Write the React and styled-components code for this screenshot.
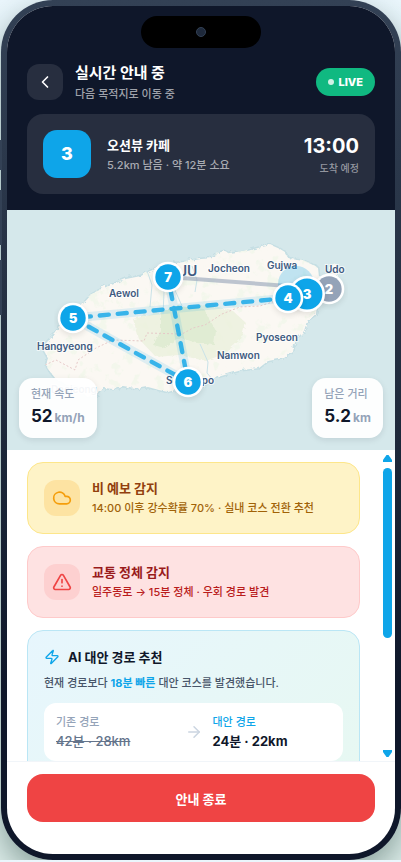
import styled, { createGlobalStyle } from "styled-components";
import {
  ArrowRight,
  ChevronLeft,
  Cloud,
  TriangleAlert,
  Zap,
} from "lucide-react";

const route = "M288 88 L73 108 L188 172 L168 67";

const coast =
  "M168 53 L183 51 L200 48 L213 47 L217 42 L223 40 L229 43 L243 41 L257 37 L270 34 L279 38 L284 41 L287 47 L296 49 L303 50 L310 53 L317 57 L318 66 L325 73 L321 85 L316 93 L315 103 L306 110 L303 120 L296 127 L293 134 L292 141 L283 147 L267 150 L258 157 L241 159 L230 162 L217 166 L207 174 L195 178 L180 177 L167 181 L158 179 L147 176 L135 178 L123 176 L112 178 L103 177 L96 184 L86 186 L78 176 L66 174 L55 168 L50 162 L45 154 L47 147 L42 138 L46 131 L55 122 L60 110 L73 103 L82 93 L90 84 L100 78 L113 73 L125 68 L140 65 L149 60 Z";

const places = [
  { name: "JU", x: 179, y: 66, size: 14 },
  { name: "Aewol", x: 109, y: 87 },
  { name: "Jocheon", x: 208, y: 62 },
  { name: "Gujwa", x: 267, y: 59 },
  { name: "Udo", x: 325, y: 63 },
  { name: "Hangyeong", x: 37, y: 140 },
  { name: "Pyoseon", x: 256, y: 131 },
  { name: "Namwon", x: 217, y: 149 },
  { name: "Seogwipo", x: 166, y: 174 },
  { name: "Daejeong", x: 51, y: 183 },
];

const pins = [
  { label: 2, x: 329, y: 79, color: "#94a3b8" },
  { label: 3, x: 307, y: 84, r: 18 },
  { label: 4, x: 288, y: 88 },
  { label: 5, x: 73, y: 108 },
  { label: 6, x: 188, y: 172 },
  { label: 7, x: 168, y: 67 },
];

function RouteMap() {
  return (
    <MapSvg
      viewBox="7 0 388 240"
      preserveAspectRatio="xMidYMid slice"
      role="img"
      aria-label="제주 경로 지도"
    >
      <defs>
        <filter id="rough" x="-5%" y="-5%" width="110%" height="110%">
          <feTurbulence baseFrequency="0.15" numOctaves="3" seed="4" />
          <feDisplacementMap in="SourceGraphic" scale="4" />
        </filter>
        <filter id="speckle" x="0" y="0" width="100%" height="100%">
          <feTurbulence
            type="fractalNoise"
            baseFrequency="0.09"
            numOctaves="4"
            seed="8"
          />
          <feColorMatrix values="0 0 0 0 0.9  0 0 0 0 0.93  0 0 0 0 0.84  0 9 0 0 -5.2" />
        </filter>
        <filter id="soft">
          <feGaussianBlur stdDeviation="3" />
        </filter>
        <clipPath id="island">
          <path d={coast} />
        </clipPath>
      </defs>

      <g filter="url(#rough)">
        <path d={coast} fill="none" stroke="#c6dfe4" strokeWidth="3" />
        <path d={coast} fill="#fbf8f3" />
        <path d="M329 57 l5 -5 l4 4 l-1 9 l-6 2 z" fill="#fbf8f3" />
      </g>
      <g clipPath="url(#island)">
        <rect x="40" y="30" width="290" height="160" filter="url(#speckle)" />
        <path
          d="M132 108 L165 100 L205 94 L232 100 L245 112 L240 128 L225 142 L205 150 L178 144 L155 146 L138 128 Z"
          fill="#ebf0dd"
          opacity="0.8"
          filter="url(#rough)"
        />
        <path
          d="M160 100 L178 95 L203 98 L215 120 L213 134 L196 132 L180 127 L164 137 L152 134 L160 120 Z"
          fill="#e0ecd3"
          filter="url(#rough)"
        />
        <path
          d="M146 58 L152 75 L150 97 M155 62 L164 82 L163 104 M174 78 L182 96 M192 56 L197 70 L195 82 M200 134 L208 152 L207 163 L213 170"
          fill="none"
          stroke="#c9e2e8"
        />
        <path
          d="M45 155 L56 150 L75 160 L78 150 L96 138 L113 130 L144 131 L147 123 L182 124 L193 118 L205 115 L222 104 L240 97 L260 96 L285 88"
          fill="none"
          stroke="#e6c9c8"
          strokeDasharray="2 2"
        />
      </g>

      {places.map(({ name, x, y, size = 10 }) => (
        <Place key={name} x={x} y={y} fontSize={size}>
          {name}
        </Place>
      ))}

      <path d="M168 67 L329 79" stroke="#94a3b8" strokeWidth="4" opacity="0.6" />
      <path
        d={route}
        fill="none"
        stroke="#0ea5e9"
        strokeWidth="9"
        strokeLinejoin="round"
        opacity="0.12"
      />
      <path
        d={route}
        fill="none"
        stroke="#0ea5e9"
        strokeWidth="4.4"
        strokeLinecap="round"
        strokeDasharray="9 9"
        opacity="0.8"
      />
      <circle cx="296" cy="74" r="18" fill="#0ea5e9" opacity="0.25" />

      {pins.map(({ label, x, y, r = 15.3, color = "#0ea5e9" }) => (
        <g key={label}>
          <circle cx={x} cy={y + 2} r={r} opacity="0.1" filter="url(#soft)" />
          <circle cx={x} cy={y} r={r} fill="#fff" />
          <circle cx={x} cy={y} r={r - 2.6} fill={color} />
          <PinLabel x={x} y={y + 5}>
            {label}
          </PinLabel>
        </g>
      ))}
    </MapSvg>
  );
}

function App() {
  return (
    <>
      <GlobalStyle />
      <Phone>
        <SideButton $top={140} $height={30} />
        <SideButton $top={190} $height={55} />
        <SideButton $top={260} $height={55} />
        <Screen>
          <Island>
            <Lens />
          </Island>
          <Header>
            <TitleRow>
              <BackButton type="button" aria-label="뒤로">
                <ChevronLeft size={20} />
              </BackButton>
              <Grow>
                <PageTitle>실시간 안내 중</PageTitle>
                <PageSubtitle>다음 목적지로 이동 중</PageSubtitle>
              </Grow>
              <LiveBadge>
                <LiveDot />
                LIVE
              </LiveBadge>
            </TitleRow>
            <NextStop>
              <StopNumber>3</StopNumber>
              <Grow>
                <StopName>오션뷰 카페</StopName>
                <StopMeta>5.2km 남음 · 약 12분 소요</StopMeta>
              </Grow>
              <Arrival>
                <ArrivalTime>13:00</ArrivalTime>
                <ArrivalLabel>도착 예정</ArrivalLabel>
              </Arrival>
            </NextStop>
          </Header>

          <MapArea>
            <RouteMap />
            <Stat $side="left">
              <StatLabel>현재 속도</StatLabel>
              <StatValue>
                52<StatUnit>km/h</StatUnit>
              </StatValue>
            </Stat>
            <Stat $side="right">
              <StatLabel>남은 거리</StatLabel>
              <StatValue>
                5.2<StatUnit>km</StatUnit>
              </StatValue>
            </Stat>
          </MapArea>

          <Body>
            <ScrollArea>
              <Alert $bg="#fef3c7" $border="#fde68a">
                <AlertIcon $bg="#fde3a2" $color="#f59e0b">
                  <Cloud size={20} />
                </AlertIcon>
                <div>
                  <AlertTitle $color="#92400e">비 예보 감지</AlertTitle>
                  <AlertText $color="#a16207">
                    14:00 이후 강수확률 70% · 실내 코스 전환 추천
                  </AlertText>
                </div>
              </Alert>
              <Alert $bg="#fee2e2" $border="#fecaca">
                <AlertIcon $bg="#fdd0d0" $color="#ef4444">
                  <TriangleAlert size={20} />
                </AlertIcon>
                <div>
                  <AlertTitle $color="#991b1b">교통 정체 감지</AlertTitle>
                  <AlertText $color="#b91c1c">
                    일주동로 → 15분 정체 · 우회 경로 발견
                  </AlertText>
                </div>
              </Alert>
              <Suggestion>
                <SuggestionTitle>
                  <Zap size={16} color="#0ea5e9" />
                  AI 대안 경로 추천
                </SuggestionTitle>
                <SuggestionText>
                  현재 경로보다 <strong>18분 빠른</strong> 대안 코스를
                  발견했습니다.
                </SuggestionText>
                <Compare>
                  <Grow>
                    <CompareLabel $color="#94a3b8">기존 경로</CompareLabel>
                    <OldRoute>42분 · 28km</OldRoute>
                  </Grow>
                  <ArrowRight size={18} color="#cbd5e1" />
                  <Grow>
                    <CompareLabel $color="#0ea5e9">대안 경로</CompareLabel>
                    <NewRoute>24분 · 22km</NewRoute>
                  </Grow>
                </Compare>
              </Suggestion>
            </ScrollArea>
            <ScrollRail aria-hidden="true">
              <svg width="9" height="7" viewBox="0 0 9 7">
                <path d="M3.5 0 H5.5 L9 5 V7 H0 V5 Z" fill="#0ea5e9" />
              </svg>
              <ScrollTrack>
                <ScrollThumb />
              </ScrollTrack>
              <svg width="9" height="7" viewBox="0 0 9 7">
                <path d="M0 0 H9 V2 L5.5 7 H3.5 L0 2 Z" fill="#0ea5e9" />
              </svg>
            </ScrollRail>
          </Body>

          <Footer>
            <EndButton type="button">안내 종료</EndButton>
          </Footer>
        </Screen>
      </Phone>
    </>
  );
}

const GlobalStyle = createGlobalStyle`
  * {
    box-sizing: border-box;
  }
  body {
    margin: 0;
    overflow: hidden;
    background: linear-gradient(180deg, #eaf6fc 0%, #d9ecf0 25%, #dcece9 100%);
    color: #0f172a;
    font-family: Inter, "Noto Sans CJK KR", sans-serif;
    font-weight: 500;
  }
  button {
    padding: 0;
    border: 0;
    font-family: inherit;
    cursor: pointer;
  }
`;

const Phone = styled.div`
  position: relative;
  height: calc(100vh - 2px);
  margin-left: 1px;
  padding: 6px;
  border-radius: 52px;
  background: linear-gradient(180deg, #334155 0%, #1e293b 50%, #0f172a 80%);
  box-shadow: 0 12px 30px rgba(15, 50, 40, 0.4);
`;

const SideButton = styled.div`
  position: absolute;
  top: ${({ $top }) => $top}px;
  left: -1px;
  width: 2px;
  height: ${({ $height }) => $height}px;
  background: #334155;
`;

const Screen = styled.main`
  position: relative;
  display: flex;
  flex-direction: column;
  height: 100%;
  overflow: hidden;
  border-radius: 46px;
  background: #fff;
`;

const Island = styled.div`
  position: absolute;
  top: 10px;
  left: 50%;
  display: flex;
  align-items: center;
  justify-content: center;
  width: 120px;
  height: 32px;
  margin-left: -60px;
  border-radius: 16px;
  background: #000;
`;

const Lens = styled.div`
  width: 10px;
  height: 10px;
  border: 1px solid #334155;
  border-radius: 50%;
  background: #1e293b;
`;

const Header = styled.header`
  display: flex;
  flex-direction: column;
  gap: 14px;
  padding: 58px 20px 16px;
  background: #0f172a;
  color: #fff;
`;

const TitleRow = styled.div`
  display: flex;
  align-items: center;
  gap: 12px;
  height: 36px;
`;

const Grow = styled.div`
  flex: 1;
`;

const BackButton = styled.button`
  display: flex;
  align-items: center;
  justify-content: center;
  width: 36px;
  height: 36px;
  border-radius: 12px;
  background: #272e3f;
  color: #fff;
`;

const PageTitle = styled.h1`
  margin: 0;
  font-size: 15px;
  font-weight: 700;
  line-height: 24px;
`;

const PageSubtitle = styled.p`
  margin: 0;
  color: #9fa2aa;
  font-size: 11px;
  line-height: 18px;
`;

const LiveBadge = styled.span`
  display: flex;
  align-items: center;
  gap: 4px;
  padding: 6px 12px;
  border-radius: 20px;
  background: #10b981;
  font-size: 11px;
  font-weight: 800;
  line-height: 16px;
`;

const LiveDot = styled.span`
  width: 6px;
  height: 6px;
  border-radius: 50%;
  background: #cff1e5;
`;

const NextStop = styled.section`
  display: flex;
  align-items: center;
  gap: 16px;
  padding: 16px;
  border-radius: 16px;
  background: #272e3f;
`;

const StopNumber = styled.div`
  width: 48px;
  border-radius: 14px;
  background: #0ea5e9;
  font-size: 18px;
  font-weight: 800;
  line-height: 48px;
  text-align: center;
`;

const StopName = styled.h2`
  margin: 0;
  font-size: 13px;
  font-weight: 700;
  line-height: 22px;
`;

const StopMeta = styled.p`
  margin: 0;
  color: #a9abb2;
  font-size: 11px;
  line-height: 18px;
`;

const Arrival = styled.div`
  text-align: right;
`;

const ArrivalTime = styled.div`
  font-size: 20px;
  font-weight: 700;
  line-height: 28px;
`;

const ArrivalLabel = styled.div`
  color: #93969f;
  font-size: 10px;
  line-height: 16px;
`;

const MapArea = styled.section`
  position: relative;
  height: 240px;
  background: #d5e8eb;
`;

const MapSvg = styled.svg`
  display: block;
  width: 100%;
  height: 100%;
`;

const Place = styled.text`
  fill: #3e5a80;
  stroke: #fff;
  stroke-width: 2px;
  stroke-opacity: 0.7;
  paint-order: stroke;
  font-weight: 600;
`;

const PinLabel = styled.text`
  fill: #fff;
  font-size: 13px;
  font-weight: 900;
  text-anchor: middle;
`;

const Stat = styled.div`
  position: absolute;
  bottom: 12px;
  ${({ $side }) => $side}: 12px;
  padding: 6px 12px 10px;
  border-radius: 14px;
  background: rgba(255, 255, 255, 0.95);
  box-shadow: 0 2px 6px rgba(15, 23, 42, 0.1);
`;

const StatLabel = styled.div`
  color: #94a3b8;
  font-size: 11px;
  line-height: 20px;
`;

const StatValue = styled.div`
  display: flex;
  align-items: baseline;
  gap: 2px;
  font-size: 17px;
  font-weight: 700;
  line-height: 24px;
`;

const StatUnit = styled.span`
  color: #94a3b8;
  font-size: 12px;
  line-height: 16px;
`;

const Body = styled.div`
  display: flex;
  flex: 1;
  min-height: 0;
`;

const ScrollArea = styled.div`
  display: flex;
  flex: 1;
  flex-direction: column;
  gap: 12px;
  overflow-y: auto;
  padding: 12px 20px;
  scrollbar-width: none;

  > * {
    flex-shrink: 0;
  }
`;

const ScrollRail = styled.div`
  display: flex;
  flex-direction: column;
  align-items: center;
  gap: 6px;
  width: 15px;
  padding: 5px 0 4px;

  svg {
    flex-shrink: 0;
  }
`;

const ScrollTrack = styled.div`
  flex: 1;
  width: 9px;
`;

const ScrollThumb = styled.div`
  height: 170px;
  border-radius: 5px;
  background: #0ea5e9;
`;

const Alert = styled.section`
  display: flex;
  align-items: center;
  gap: 12px;
  padding: 16px;
  border: 1px solid ${({ $border }) => $border};
  border-radius: 16px;
  background: ${({ $bg }) => $bg};
`;

const AlertIcon = styled.div`
  display: flex;
  align-items: center;
  justify-content: center;
  width: 36px;
  height: 36px;
  border-radius: 12px;
  background: ${({ $bg }) => $bg};
  color: ${({ $color }) => $color};
`;

const AlertTitle = styled.h3`
  margin: 0 0 2px;
  color: ${({ $color }) => $color};
  font-size: 13px;
  font-weight: 700;
  line-height: 18px;
`;

const AlertText = styled.p`
  margin: 0;
  color: ${({ $color }) => $color};
  font-size: 11px;
  line-height: 18px;
`;

const Suggestion = styled.section`
  padding: 16px;
  border: 1px solid #bae6f5;
  border-radius: 16px;
  background: linear-gradient(135deg, #e7f6fd, #e7f8f2);
`;

const SuggestionTitle = styled.h3`
  display: flex;
  align-items: center;
  gap: 8px;
  margin: 0 0 6px;
  font-size: 13px;
  font-weight: 700;
  line-height: 20px;
`;

const SuggestionText = styled.p`
  margin: 0 0 10px;
  color: #475569;
  font-size: 11px;
  line-height: 20px;

  strong {
    color: #0ea5e9;
    font-weight: 700;
  }
`;

const Compare = styled.div`
  display: flex;
  align-items: center;
  gap: 10px;
  padding: 10px 12px;
  border-radius: 12px;
  background: #fff;
`;

const CompareLabel = styled.div`
  color: ${({ $color }) => $color};
  font-size: 11px;
  line-height: 18px;
`;

const OldRoute = styled.div`
  color: #64748b;
  font-size: 13px;
  line-height: 20px;
  text-decoration: line-through;
`;

const NewRoute = styled.div`
  font-size: 13px;
  font-weight: 700;
  line-height: 20px;
`;

const Footer = styled.footer`
  padding: 12px 20px 32px;
  border-top: 1px solid #f1f5f9;
`;

const EndButton = styled.button`
  width: 100%;
  height: 48px;
  border-radius: 16px;
  background: #ef4444;
  color: #fff;
  font-size: 13px;
  font-weight: 700;
`;

export default App;
